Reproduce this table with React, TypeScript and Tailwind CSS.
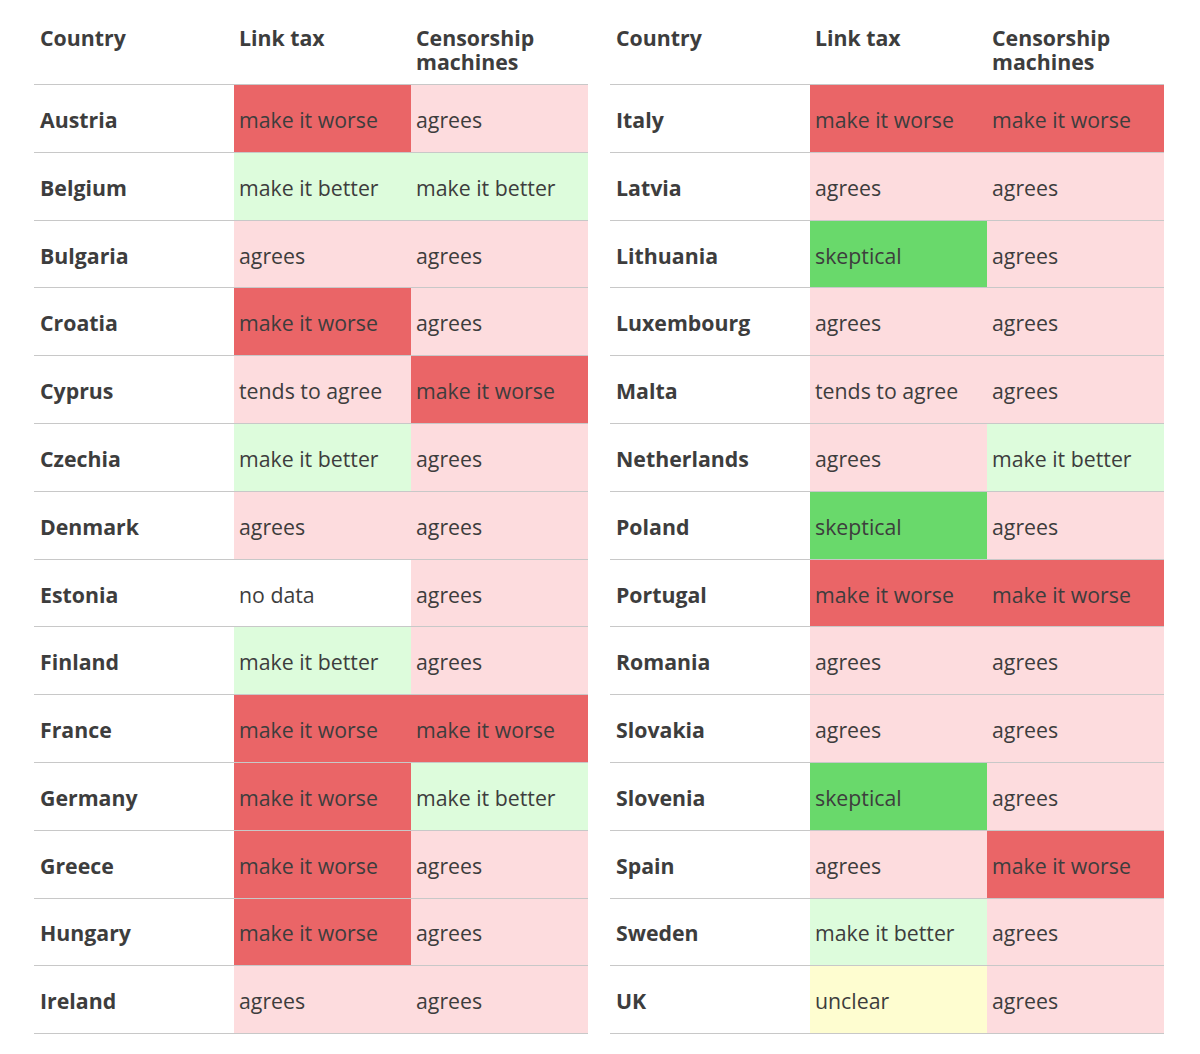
import React from 'react'

type Rating = 'worse' | 'better' | 'agrees' | 'tends' | 'skeptical' | 'unclear' | 'nodata'

const styles: Record<Rating, { label: string; bg: string }> = {
  worse: { label: 'make it worse', bg: 'bg-[#ea6567]' },
  better: { label: 'make it better', bg: 'bg-[#ddfcdc]' },
  agrees: { label: 'agrees', bg: 'bg-[#fddcde]' },
  tends: { label: 'tends to agree', bg: 'bg-[#fddcde]' },
  skeptical: { label: 'skeptical', bg: 'bg-[#69d96b]' },
  unclear: { label: 'unclear', bg: 'bg-[#fefdd0]' },
  nodata: { label: 'no data', bg: 'bg-white' },
}

const left: [string, Rating, Rating][] = [
  ['Austria', 'worse', 'agrees'],
  ['Belgium', 'better', 'better'],
  ['Bulgaria', 'agrees', 'agrees'],
  ['Croatia', 'worse', 'agrees'],
  ['Cyprus', 'tends', 'worse'],
  ['Czechia', 'better', 'agrees'],
  ['Denmark', 'agrees', 'agrees'],
  ['Estonia', 'nodata', 'agrees'],
  ['Finland', 'better', 'agrees'],
  ['France', 'worse', 'worse'],
  ['Germany', 'worse', 'better'],
  ['Greece', 'worse', 'agrees'],
  ['Hungary', 'worse', 'agrees'],
  ['Ireland', 'agrees', 'agrees'],
]

const right: [string, Rating, Rating][] = [
  ['Italy', 'worse', 'worse'],
  ['Latvia', 'agrees', 'agrees'],
  ['Lithuania', 'skeptical', 'agrees'],
  ['Luxembourg', 'agrees', 'agrees'],
  ['Malta', 'tends', 'agrees'],
  ['Netherlands', 'agrees', 'better'],
  ['Poland', 'skeptical', 'agrees'],
  ['Portugal', 'worse', 'worse'],
  ['Romania', 'agrees', 'agrees'],
  ['Slovakia', 'agrees', 'agrees'],
  ['Slovenia', 'skeptical', 'agrees'],
  ['Spain', 'agrees', 'worse'],
  ['Sweden', 'better', 'agrees'],
  ['UK', 'unclear', 'agrees'],
]

function Cell({ r }: { r: Rating }) {
  const s = styles[r]
  return (
    <div className={`w-[177px] h-full flex items-center pl-[5px] pt-[3px] ${s.bg}`}>
      {s.label}
    </div>
  )
}

function CountryTable({ rows }: { rows: [string, Rating, Rating][] }) {
  return (
    <div className="w-[554px]">
      <div className="flex font-bold leading-[24px] pt-[26px] pb-[10px] border-b border-[#c8c8c8]">
        <div className="w-[200px] pl-[6px]">Country</div>
        <div className="w-[177px] pl-[5px]">Link tax</div>
        <div className="w-[177px] pl-[5px]">
          Censorship
          <br />
          machines
        </div>
      </div>
      {rows.map(([country, a, b]) => (
        <div key={country} className="flex h-[67.8px] border-b border-[#c8c8c8]">
          <div className="w-[200px] flex items-center pl-[6px] pt-[3px] font-bold">{country}</div>
          <Cell r={a} />
          <Cell r={b} />
        </div>
      ))}
    </div>
  )
}

export default function App() {
  return (
    <div
      className="w-[1200px] h-[1054px] bg-white text-[#3d3d3d] text-[21.3px]"
      style={{ fontFamily: '"Open Sans", "Noto Sans", sans-serif' }}
    >
      <div className="flex gap-[22px] pl-[34px]">
        <CountryTable rows={left} />
        <CountryTable rows={right} />
      </div>
    </div>
  )
}
